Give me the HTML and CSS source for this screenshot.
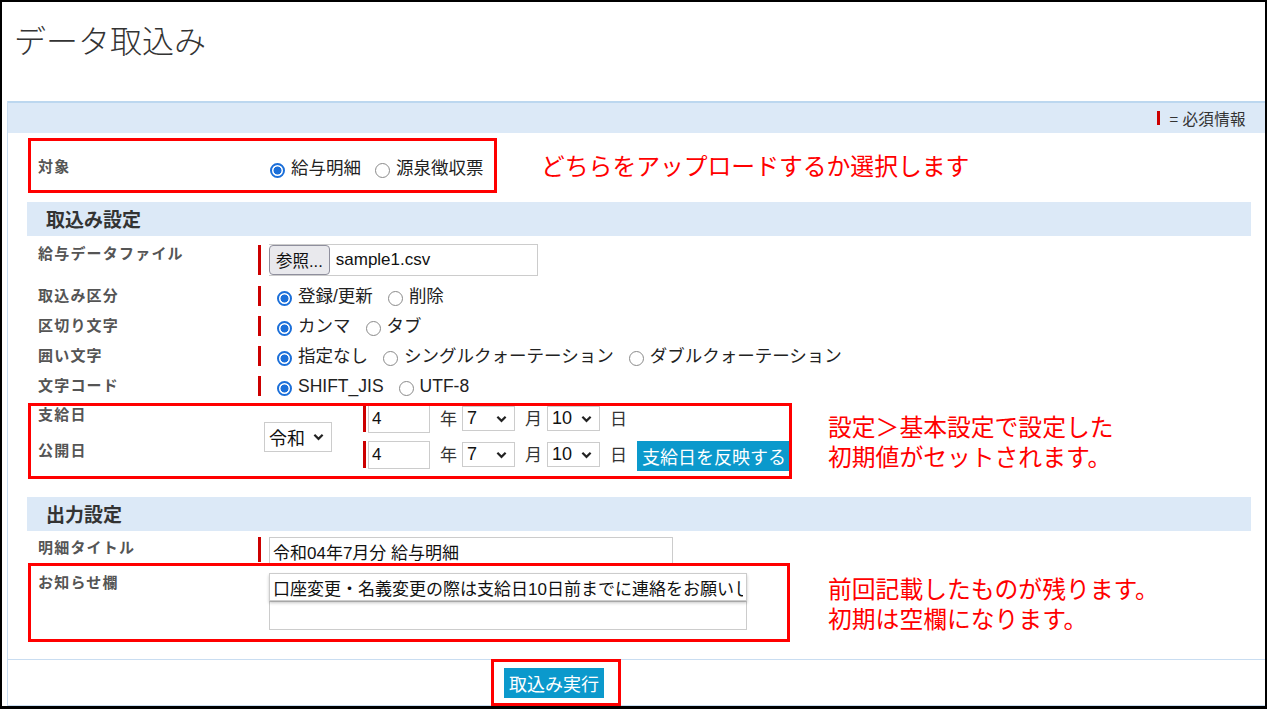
FILE: index.html
```html
<!DOCTYPE html>
<html lang="ja">
<head>
<meta charset="utf-8">
<title>データ取込み</title>
<link rel="stylesheet" href="styles.css">
</head>
<body>
<div class="frame">
  <h1 class="page-title">データ取込み</h1>

  <div class="panel">
    <div class="legend"><span class="req-mark"></span>= 必須情報</div>

    <div class="panel-body">
      <div class="target-row">
        <div class="label">対象</div>
        <div class="opts target-opts">
          <label class="opt"><input type="radio" name="target" checked>給与明細</label>
          <label class="opt"><input type="radio" name="target">源泉徴収票</label>
        </div>
      </div>

      <h2 class="section">取込み設定</h2>
      <div class="rows">
        <div class="row row-file">
          <div class="label">給与データファイル</div>
          <div class="value req">
            <div class="file"><span class="file-btn">参照...</span><span class="file-name">sample1.csv</span></div>
          </div>
        </div>
        <div class="row row-radio">
          <div class="label">取込み区分</div>
          <div class="value req">
            <label class="opt"><input type="radio" name="mode" checked>登録/更新</label>
            <label class="opt"><input type="radio" name="mode">削除</label>
          </div>
        </div>
        <div class="row row-radio">
          <div class="label">区切り文字</div>
          <div class="value req">
            <label class="opt"><input type="radio" name="sep" checked>カンマ</label>
            <label class="opt"><input type="radio" name="sep">タブ</label>
          </div>
        </div>
        <div class="row row-radio">
          <div class="label">囲い文字</div>
          <div class="value req">
            <label class="opt"><input type="radio" name="quote" checked>指定なし</label>
            <label class="opt"><input type="radio" name="quote">シングルクォーテーション</label>
            <label class="opt"><input type="radio" name="quote">ダブルクォーテーション</label>
          </div>
        </div>
        <div class="row row-radio">
          <div class="label">文字コード</div>
          <div class="value req">
            <label class="opt"><input type="radio" name="enc" checked>SHIFT_JIS</label>
            <label class="opt"><input type="radio" name="enc">UTF-8</label>
          </div>
        </div>
      </div>

      <div class="dates">
        <div class="label date-label-1">支給日</div>
        <div class="label date-label-2">公開日</div>
        <div class="era">
          <div class="select select-era"><span>令和</span><svg class="chev" viewBox="0 0 12 8"><path d="M1.5 1.5 L6 6 L10.5 1.5"/></svg></div>
        </div>
        <div class="date-line date-line-1">
          <div class="req date-fields">
            <input class="text year" type="text" value="4">
            <span class="unit">年</span>
            <div class="select select-num"><span>7</span><svg class="chev" viewBox="0 0 12 8"><path d="M1.5 1.5 L6 6 L10.5 1.5"/></svg></div>
            <span class="unit">月</span>
            <div class="select select-num"><span>10</span><svg class="chev" viewBox="0 0 12 8"><path d="M1.5 1.5 L6 6 L10.5 1.5"/></svg></div>
            <span class="unit">日</span>
          </div>
        </div>
        <div class="date-line date-line-2">
          <div class="req date-fields">
            <input class="text year" type="text" value="4">
            <span class="unit">年</span>
            <div class="select select-num"><span>7</span><svg class="chev" viewBox="0 0 12 8"><path d="M1.5 1.5 L6 6 L10.5 1.5"/></svg></div>
            <span class="unit">月</span>
            <div class="select select-num"><span>10</span><svg class="chev" viewBox="0 0 12 8"><path d="M1.5 1.5 L6 6 L10.5 1.5"/></svg></div>
            <span class="unit">日</span>
          </div>
          <button class="btn btn-copy" type="button">支給日を反映する</button>
        </div>
      </div>

      <h2 class="section section-out">出力設定</h2>
      <div class="rows">
        <div class="row row-title">
          <div class="label">明細タイトル</div>
          <div class="value req">
            <input class="text title-input" type="text" value="令和04年7月分 給与明細">
          </div>
        </div>
        <div class="row row-notice">
          <div class="label">お知らせ欄</div>
          <div class="value notice">
            <input class="text notice-line notice-first" type="text" value="口座変更・名義変更の際は支給日10日前までに連絡をお願いします。">
            <input class="text notice-line" type="text" value="">
          </div>
        </div>
      </div>
    </div>

    <div class="footer">
      <button class="btn btn-run" type="button">取込み実行</button>
    </div>
  </div>

  <!-- callout frames and notes drawn over the form -->
  <div class="callout callout-target"></div>
  <div class="callout callout-dates"></div>
  <div class="callout callout-notice"></div>
  <div class="callout callout-run"></div>
  <p class="note note-target">どちらをアップロードするか選択します</p>
  <div class="note note-dates"><p>設定＞基本設定で設定した</p><p>初期値がセットされます。</p></div>
  <div class="note note-notice"><p>前回記載したものが残ります。</p><p>初期は空欄になります。</p></div>
</div>
</body>
</html>
```

FILE: styles.css
```css
body {
  margin: 0;
  background: #fff;
  font-family: "Liberation Sans", "Noto Sans CJK JP", sans-serif;
  color: #333;
}

.frame {
  position: relative;
  width: 1267px;
  height: 709px;
  box-sizing: border-box;
  border: 2px solid #000;
  border-bottom-width: 3px;
  display: flex;
  flex-direction: column;
  background: #fff;
  overflow: hidden;
}

.page-title {
  margin: 0;
  height: 99px;
  box-sizing: border-box;
  padding: 16px 0 0 12px;
  font-family: "Noto Sans CJK JP", sans-serif;
  font-weight: 300;
  font-size: 32px;
  line-height: 42px;
  color: #333;
  flex: none;
}

.panel {
  flex: 1;
  margin-left: 5px;
  border-left: 1px solid #c9ddf1;
  border-bottom: 1px solid #c9ddf1;
  display: flex;
  flex-direction: column;
}

.legend {
  height: 30px;
  border-top: 2px solid #bcd7ef;
  background: #dce9f7;
  display: flex;
  justify-content: flex-end;
  align-items: center;
  padding-right: 19px;
  font-family: "Noto Sans CJK JP", sans-serif;
  font-size: 15.5px;
  letter-spacing: 0.4px;
  color: #333;
}

.req-mark {
  width: 3px;
  height: 14px;
  background: #c00;
  margin-right: 10px;
}

.panel-body {
  padding: 0 14px 0 19px;
}

.label {
  padding-left: 11px;
  font-family: "Noto Sans CJK JP", sans-serif;
  font-weight: bold;
  font-size: 15px;
  letter-spacing: 1.2px;
  line-height: 18px;
  color: #555;
}

/* 対象 */
.target-row {
  margin-top: 7px;
  height: 52px;
  display: flex;
  align-items: center;
}

.target-row .label {
  width: 229px;
}

.target-opts {
  padding-top: 4px;
}

.opts,
.value {
  display: flex;
  align-items: center;
}

.opt {
  display: inline-flex;
  align-items: center;
  font-size: 17.5px;
  line-height: 20px;
  color: #222;
  margin-right: 11px;
  white-space: nowrap;
}

/* radio buttons */
.opt input {
  appearance: none;
  -webkit-appearance: none;
  box-sizing: border-box;
  width: 15px;
  height: 15px;
  border-radius: 50%;
  border: 1.6px solid #8a8a8a;
  background: #fff;
  margin: 5px 6px 0 3px;
  flex: none;
}

.opt input:checked {
  border: 2px solid #1b6fd9;
  background: radial-gradient(circle, #1b6fd9 0 3.7px, #fff 4.3px);
}

/* section headers */
.section {
  margin: 10px 0 0;
  height: 34px;
  box-sizing: border-box;
  padding-left: 19px;
  background: #dce9f7;
  font-family: "Noto Sans CJK JP", sans-serif;
  font-weight: bold;
  font-size: 19px;
  line-height: 34px;
  color: #333;
}

.section-out {
  margin-top: 22px;
}

/* label / value rows */
.row {
  display: grid;
  grid-template-columns: 231px 1fr;
}

.req {
  border-left: 3px solid #c00;
}

.row .value {
  padding-left: 8px;
}

.row-file {
  height: 45px;
  padding-top: 8px;
  box-sizing: border-box;
}

.row-file .value {
  height: 30px;
  margin-top: 1px;
}

.file {
  display: flex;
  align-items: stretch;
  width: 269px;
  height: 32px;
  box-sizing: border-box;
  margin-top: -1px;
  border: 1px solid #ccc;
  border-left: none;
  background: #fff;
}

.file-btn {
  display: flex;
  align-items: center;
  padding: 0 6px;
  margin-right: 6px;
  border: 1px solid #8f8f9d;
  border-radius: 4px;
  background: #e9e9ed;
  font-size: 16.5px;
  color: #111;
}

.file-name {
  display: flex;
  align-items: center;
  font-size: 17px;
  color: #111;
}

.row-radio {
  height: 30px;
  align-items: center;
}

.row-radio .label {
  padding-bottom: 2px;
}

.row-radio .value {
  height: 20px;
}

.row-radio .opt input {
  margin-left: 6px;
}

.row-radio .opt {
  margin-right: 9px;
}

.row-radio .opt:first-child input {
  margin-left: 8px;
}

/* 支給日 / 公開日 */
.dates {
  display: grid;
  grid-template-columns: 237px 99px 1fr;
  grid-template-rows: 36px 38px;
}

.date-label-1 {
  grid-column: 1;
  grid-row: 1;
  padding-top: 4px;
}

.date-label-2 {
  grid-column: 1;
  grid-row: 2;
  padding-top: 4px;
}

.era {
  grid-column: 2;
  grid-row: 1 / 3;
  display: flex;
  align-items: center;
  padding-bottom: 2px;
}

.date-line {
  grid-column: 3;
  display: flex;
  align-items: flex-start;
  padding-top: 4px;
}

.date-line-1 {
  grid-row: 1;
}

.date-line-2 {
  grid-row: 2;
}

.date-fields {
  display: flex;
  align-items: center;
  height: 27px;
  padding-left: 2px;
}

.text {
  box-sizing: border-box;
  border: 1px solid #ccc;
  border-radius: 0;
  padding: 0 3px;
  font-family: "Liberation Sans", "Noto Sans CJK JP", sans-serif;
  font-size: 17px;
  color: #111;
  background: #fff;
  outline: none;
}

.year {
  width: 62px;
  height: 28px;
}

.unit {
  font-family: "Noto Sans CJK JP", sans-serif;
  font-size: 17px;
  color: #333;
  margin: 0 5px 0 10px;
  padding-bottom: 3px;
}

.select + .unit {
  margin-left: 10px;
}

.select {
  display: flex;
  align-items: center;
  justify-content: space-between;
  box-sizing: border-box;
  height: 25px;
  border: 1px solid #ccc;
  background: #fff;
  padding: 0 7px 0 4px;
  font-size: 18px;
  color: #111;
}

.select-num {
  width: 53px;
}

.select-era {
  width: 68px;
  height: 30px;
  font-family: "Noto Sans CJK JP", sans-serif;
  font-size: 18px;
}

.chev {
  width: 11px;
  height: 8px;
  fill: none;
  stroke: #222;
  stroke-width: 2.4;
}

.btn {
  border: none;
  border-radius: 0;
  background: #0b99cc;
  color: #fff;
  font-family: "Noto Sans CJK JP", sans-serif;
  font-size: 18px;
  line-height: 30px;
  height: 30px;
  padding: 0 5px;
  cursor: pointer;
  white-space: nowrap;
}

.btn-copy {
  margin-left: 5px;
  padding: 0 5px;
}

/* 出力設定 rows */
.row-title {
  padding-top: 6px;
  height: 38px;
  box-sizing: border-box;
}

.row-title .label {
  padding-top: 1px;
}

.row-title .value {
  align-items: flex-start;
  height: 25px;
}

.title-input {
  width: 404px;
  height: 28px;
}

.row-notice {
  padding-top: 4px;
}

.row-notice .value {
  flex-direction: column;
  align-items: flex-start;
  padding-left: 11px;
}

.notice-line {
  width: 478px;
  height: 29px;
}

.notice-first {
  height: 28px;
  box-shadow: 0 2px 3px rgba(0, 0, 0, 0.22);
  position: relative;
  z-index: 1;
}

/* footer with the run button */
.footer {
  margin-top: auto;
  border-top: 1px solid #c9ddf1;
  height: 46px;
  padding: 8px 0 0 496px;
  box-sizing: border-box;
}

.btn-run {
  width: 100px;
  padding: 0;
}

/* red callouts */
.callout {
  position: absolute;
  box-sizing: border-box;
  border: 3px solid #f00;
  pointer-events: none;
}

.callout-target { left: 26px; top: 136px; width: 469px; height: 55px; }
.callout-dates  { left: 26px; top: 401px; width: 764px; height: 76px; }
.callout-notice { left: 26px; top: 561px; width: 762px; height: 79px; }
.callout-run    { left: 489px; top: 657px; width: 130px; height: 47px; }

.note {
  position: absolute;
  margin: 0;
  font-family: "Noto Sans CJK JP", sans-serif;
  font-size: 23.8px;
  line-height: 30px;
  color: #f00;
  white-space: nowrap;
}

.note p {
  margin: 0;
  height: 30px;
}

.note-target { left: 539px; top: 148px; }
.note-dates  { left: 826px; top: 409px; }
.note-notice { left: 826px; top: 571px; }
```
